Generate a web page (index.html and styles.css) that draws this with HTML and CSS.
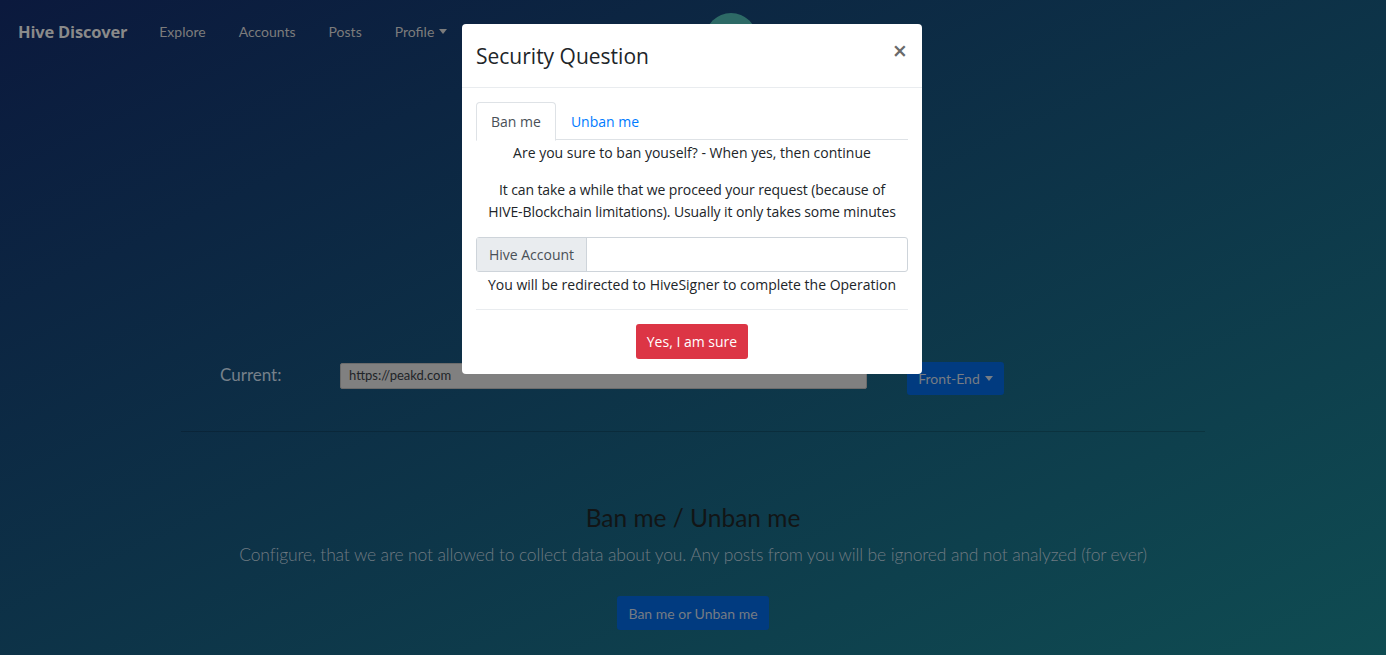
FILE: index.html
```html
<!DOCTYPE html>
<html lang="en">
<head>
<meta charset="utf-8">
<title>Hive Discover</title>
<link rel="stylesheet" href="styles.css">
</head>
<body>
<nav class="navbar">
  <a class="brand">Hive Discover</a>
  <ul class="nav-links">
    <li>Explore</li>
    <li>Accounts</li>
    <li>Posts</li>
    <li class="dropdown">Profile<span class="caret"></span></li>
  </ul>
  <span class="avatar"></span>
</nav>

<main class="container">
  <div class="frontend-row">
    <label class="current-label">Current:</label>
    <div class="current-input">https://peakd.com</div>
    <button class="btn-dark-primary btn-frontend">Front-End<span class="caret"></span></button>
  </div>
  <hr class="divider">
  <section class="ban-section">
    <h2 class="ban-title">Ban me / Unban me</h2>
    <p class="ban-lead">Configure, that we are not allowed to collect data about you. Any posts from you will be ignored and not analyzed (for ever)</p>
    <button class="btn-dark-primary btn-ban">Ban me or Unban me</button>
  </section>
</main>

<div class="modal">
  <div class="modal-header">
    <h5 class="modal-title">Security Question</h5>
    <span class="close">&times;</span>
  </div>
  <div class="modal-body">
    <ul class="tabs">
      <li class="tab active">Ban me</li>
      <li class="tab">Unban me</li>
    </ul>
    <p class="q">Are you sure to ban youself? - When yes, then continue</p>
    <p class="info">It can take a while that we proceed your request (because of<br>HIVE-Blockchain limitations). Usually it only takes some minutes</p>
    <div class="input-group">
      <span class="prepend">Hive Account</span>
      <span class="field"></span>
    </div>
    <p class="redirect">You will be redirected to HiveSigner to complete the Operation</p>
    <hr class="modal-hr">
    <div class="actions">
      <button class="btn-danger">Yes, I am sure</button>
    </div>
  </div>
</div>
</body>
</html>
```

FILE: styles.css
```css
* { box-sizing: border-box; }
html, body { margin: 0; padding: 0; }
body {
  width: 1386px;
  height: 655px;
  overflow: hidden;
  position: relative;
  background: linear-gradient(to bottom right, #0b193d, #0f4c52);
  font-family: Lato, "Open Sans", sans-serif;
  color: #808080;
}

.navbar {
  display: flex;
  align-items: flex-start;
  height: 62px;
  padding: 0 18px;
}
.brand {
  font-family: "Open Sans", sans-serif;
  font-weight: 700;
  font-size: 16.5px;
  color: #8a8a8a;
  margin-top: 20px;
  letter-spacing: -0.2px;
}
.nav-links {
  display: flex;
  list-style: none;
  margin: 23px 0 0 32px;
  padding: 0;
  gap: 33px;
  font-size: 14px;
  color: #7c7c7c;
}
.caret {
  display: inline-block;
  margin-left: 5px;
  vertical-align: 3px;
  border-top: 5px solid currentColor;
  border-left: 4.5px solid transparent;
  border-right: 4.5px solid transparent;
}
.avatar {
  width: 52px;
  height: 52px;
  border-radius: 50%;
  background: #2d6a66;
  margin: 13px 0 0 258px;
}

.container {
  width: 1024px;
  margin: 0 auto;
}
.frontend-row {
  display: flex;
  align-items: flex-start;
  margin-top: 300px;
  padding-left: 39px;
  height: 34px;
}
.current-label {
  font-size: 17px;
  line-height: 26px;
  color: #76808a;
  width: 120px;
}
.current-input {
  width: 527px;
  height: 26px;
  margin-top: 1px;
  background: #808080;
  border: 1px solid #6b6b6b;
  border-radius: 2px;
  color: #202428;
  font-size: 13px;
  padding: 3px 8px 0;
}
.btn-dark-primary {
  background: #013b80;
  border: none;
  border-radius: 3px;
  color: #767c84;
  font-family: Lato, sans-serif;
  font-size: 14px;
  cursor: pointer;
}
.btn-frontend {
  margin-left: 40px;
  width: 97px;
  height: 33px;
}
.divider {
  border: 0;
  border-top: 1px solid rgba(0, 0, 0, 0.18);
  margin: 35px 0 0;
}
.ban-section {
  text-align: center;
  padding-top: 71px;
}
.ban-title {
  margin: 0;
  font-weight: 400;
  font-size: 24.5px;
  color: #121516;
  line-height: 30px;
}
.ban-lead {
  margin: 10px 0 0;
  font-size: 17.5px;
  font-weight: 300;
  color: #6f7a82;
  line-height: 24px;
  letter-spacing: -0.15px;
}
.btn-ban {
  margin-top: 29px;
  width: 152px;
  height: 34px;
}

/* modal */
.modal {
  position: absolute;
  left: 462px;
  top: 24px;
  width: 460px;
  height: 350px;
  background: #fff;
  border-radius: 4px;
  font-family: "Open Sans", sans-serif;
  color: #212529;
}
.modal-header {
  display: flex;
  justify-content: space-between;
  align-items: center;
  height: 64px;
  padding: 0 14px;
  border-bottom: 1px solid #e9ecef;
}
.modal-title {
  margin: 0;
  font-size: 21px;
  font-weight: 400;
  color: #212529;
}
.close {
  font-size: 25px;
  line-height: 1;
  color: #6a6a6a;
  margin-top: -10px;
  margin-right: 1px;
  font-weight: 600;
}
.modal-body {
  padding: 14px 14px 0;
}
.tabs {
  display: flex;
  list-style: none;
  margin: 0;
  padding: 0;
  border-bottom: 1px solid #dee2e6;
  height: 38px;
}
.tab {
  padding: 0 14px;
  font-size: 14px;
  line-height: 38px;
  color: #007bff;
  border: 1px solid transparent;
  border-radius: 4px 4px 0 0;
}
.tab.active {
  color: #495057;
  border-color: #dee2e6 #dee2e6 #fff;
  background: #fff;
  height: 39px;
}
.q, .info, .redirect {
  text-align: center;
  font-size: 14px;
  line-height: 22px;
  margin: 0;
  color: #212529;
}
.q { margin-top: 2px; }
.info { margin-top: 15px; letter-spacing: -0.1px; }
.input-group {
  display: flex;
  height: 35px;
  margin-top: 14px;
  border: 1px solid #ced4da;
  border-radius: 3px;
}
.prepend {
  width: 110px;
  background: #e9ecef;
  border-right: 1px solid #ced4da;
  color: #495057;
  font-size: 14px;
  line-height: 33px;
  text-align: center;
}
.field { flex: 1; }
.redirect { margin-top: 2px; }
.modal-hr {
  border: 0;
  border-top: 1px solid #e9ecef;
  margin: 13px 0 0;
}
.actions {
  display: flex;
  justify-content: center;
  padding-top: 14px;
}
.btn-danger {
  background: #dc3545;
  color: #fff;
  border: none;
  border-radius: 3px;
  width: 112px;
  height: 35px;
  font-family: "Open Sans", sans-serif;
  font-size: 14px;
}
```
